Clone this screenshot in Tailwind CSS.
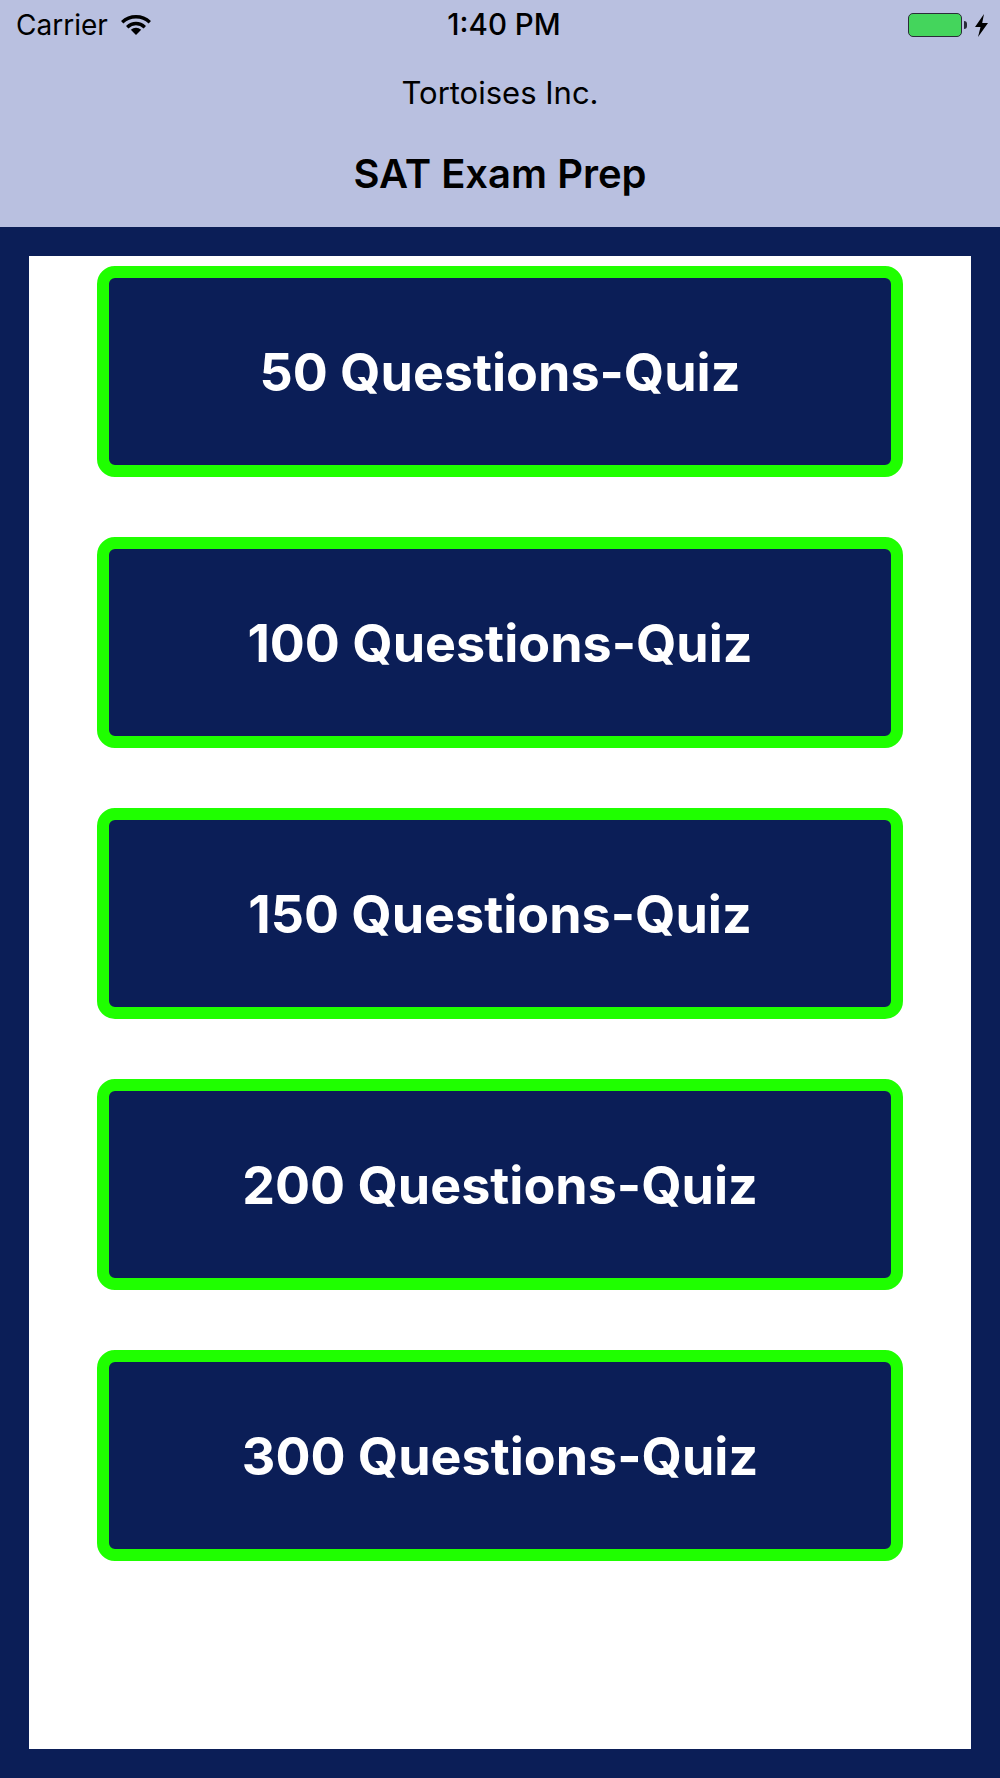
<!DOCTYPE html>
<html lang="en">
<head>
    <meta charset="UTF-8">
    <meta name="viewport" content="width=device-width, initial-scale=1.0">
    <title>SAT Exam Prep</title>
    <script src="https://cdn.jsdelivr.net/npm/@tailwindcss/browser@4"></script>
</head>
<body class="w-[1000px] h-[1778px] overflow-hidden flex flex-col bg-[#0b1e57] font-['Inter',sans-serif]">
    <header class="h-[227px] bg-[#b9c0e0] text-black">
        <div class="h-[50px] flex items-center justify-between relative">
            <div class="flex items-center pl-4">
                <span class="text-[28px] leading-none">Carrier</span>
                <svg class="w-[30px] h-[21px] ml-[13px] -mt-[1px]" viewBox="0 0 30 21" fill="none" stroke="black" stroke-width="3.4">
                    <path d="M1.200 8.200C9 .9 21 .9 28.800 8.200"/>
                    <path d="M6.200 13.200C11.500 8.300 18.500 8.300 23.800 13.200"/>
                    <path d="M9.800 15.800L15 21L20.200 15.800C17 13 13 13 9.800 15.800Z" fill="black" stroke="none"/>
                </svg>
            </div>
            <span class="absolute left-[8px] right-0 text-center text-[29.500px] leading-none font-medium">1:40 PM</span>
            <div class="flex items-center pr-[12px]">
                <div class="w-[54px] h-[24px] rounded-[5px] border border-[#2a2c38] bg-[#44d55c]"></div>
                <div class="w-[3px] h-[8px] rounded-r-sm bg-[#2a2c38] ml-[2px]"></div>
                <svg class="w-[13px] h-[23px] ml-[8px]" viewBox="0 0 13 23" fill="black">
                    <path d="M9 0L0 13H5.500L3 23L13 9H7.200Z"/>
                </svg>
            </div>
        </div>
        <p class="mt-[25px] text-center text-[31px] leading-[36px]">Tortoises Inc.</p>
        <h1 class="mt-[39px] text-center text-[40px] leading-[48px] font-semibold">SAT Exam Prep</h1>
    </header>

    <main class="flex-1 p-[29px]">
        <div class="h-full bg-white pt-[10px] px-[68px] flex flex-col gap-[60px]">
            <button class="h-[211px] pt-[2px] rounded-[18px] border-[12px] border-[#1fff00] bg-[#0b1e57] text-white text-[52px] font-bold">50 Questions-Quiz</button>
            <button class="h-[211px] pt-[2px] rounded-[18px] border-[12px] border-[#1fff00] bg-[#0b1e57] text-white text-[52px] font-bold">100 Questions-Quiz</button>
            <button class="h-[211px] pt-[2px] rounded-[18px] border-[12px] border-[#1fff00] bg-[#0b1e57] text-white text-[52px] font-bold">150 Questions-Quiz</button>
            <button class="h-[211px] pt-[2px] rounded-[18px] border-[12px] border-[#1fff00] bg-[#0b1e57] text-white text-[52px] font-bold">200 Questions-Quiz</button>
            <button class="h-[211px] pt-[2px] rounded-[18px] border-[12px] border-[#1fff00] bg-[#0b1e57] text-white text-[52px] font-bold">300 Questions-Quiz</button>
        </div>
    </main>
</body>
</html>
